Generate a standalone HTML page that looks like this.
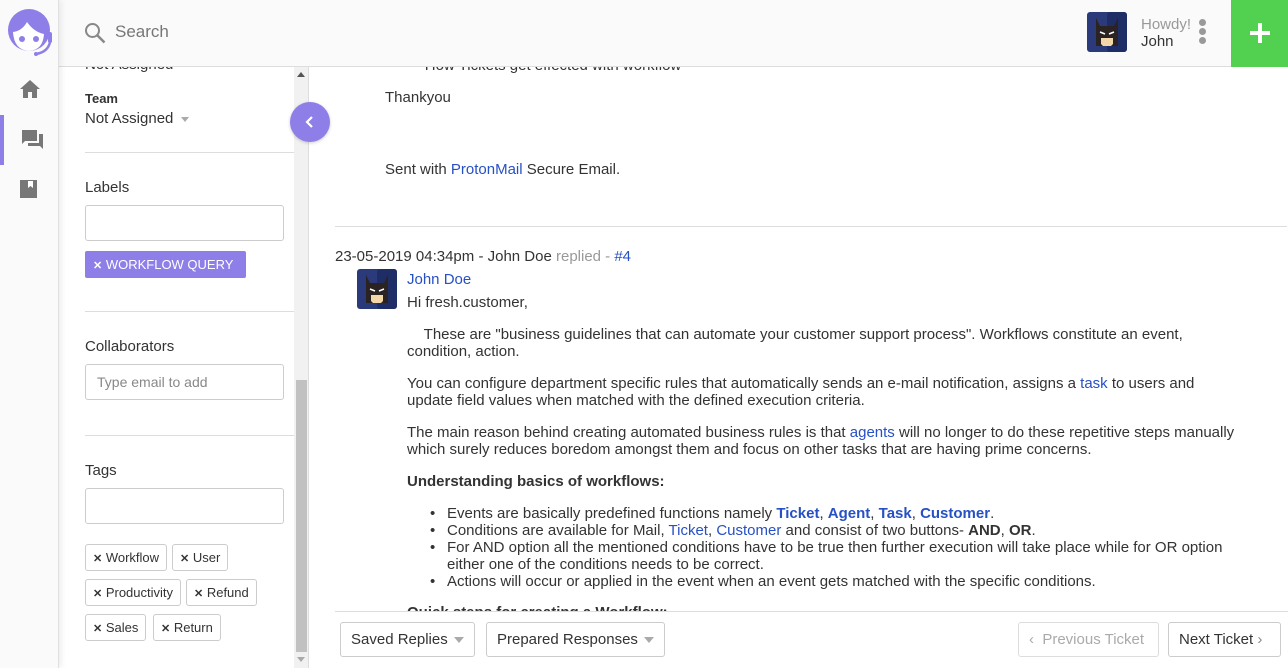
<!DOCTYPE html>
<html><head><meta charset="utf-8"><style>
*{box-sizing:border-box;margin:0;padding:0}
body{width:1288px;height:668px;overflow:hidden;font-family:"Liberation Sans",Arial,sans-serif;color:#333;background:#fff;position:relative}
.abs{position:absolute}
a{color:#2750c4;text-decoration:none}
.nav{left:0;top:0;width:59px;height:668px;background:#fafafa;border-right:1px solid #e0e0e0;box-shadow:2px 0 6px rgba(0,0,0,.08);z-index:3}
.hdr{left:59px;top:0;width:1229px;height:67px;background:#fafafa;border-bottom:1px solid #ddd;z-index:2}
.side{left:60px;top:67px;width:249px;height:601px;border-right:1px solid #ddd;overflow:hidden;font-size:15px}
.inp{position:absolute;left:25px;width:199px;height:36px;border:1px solid #ccc;border-radius:3px;background:#fff}
.hr{position:absolute;left:25px;width:209px;height:1px;background:#ddd}
.tag{position:absolute;height:27px;border:1px solid #ccc;border-radius:3px;font-size:13px;line-height:25px;padding:0 7px;color:#333;background:#fff}
.x{font-weight:bold;font-size:11px}
.main{left:310px;top:67px;width:978px;height:601px;font-size:15px;line-height:17px;color:#333}
.btn{position:absolute;top:622px;height:35px;border:1px solid #ccc;border-radius:3px;font-size:15px;line-height:33px;padding:0 10px;background:#fff;color:#333}
.caret{display:inline-block;width:0;height:0;border-left:5px solid transparent;border-right:5px solid transparent;border-top:6px solid #aaa;vertical-align:middle;margin-left:6px}
p{position:absolute}
</style></head><body>
<div class="abs nav">
 <svg class="abs" style="left:6px;top:6px" width="48" height="50" viewBox="0 0 48 50">
  <circle cx="23" cy="24" r="21" fill="#8e7ee8"/>
  <path d="M7 26 Q8 44 23 45 Q37 44 38 28 Q28 26 21 16 Q16 25 7 26Z" fill="#fff"/>
  <circle cx="16" cy="33" r="3" fill="#8e7ee8"/><circle cx="30" cy="33" r="3" fill="#8e7ee8"/>
  <rect x="42" y="26" width="4" height="11" rx="2" fill="#8e7ee8"/>
  <path d="M44 36 Q42 46 30 48" fill="none" stroke="#8e7ee8" stroke-width="2.5"/>
  <circle cx="30" cy="48" r="2" fill="#8e7ee8"/>
 </svg>
 <svg class="abs" style="left:20px;top:80px" width="20" height="18" viewBox="0 0 20 18"><path d="M8 18V12h4v6h5V9h3L10 0 0 9h3v9z" fill="#777"/></svg>
 <div class="abs" style="left:0;top:115px;width:4px;height:50px;background:#8e7ee8"></div>
 <svg class="abs" style="left:22px;top:130px" width="22" height="20" viewBox="0 0 22 20"><path d="M0 0h15v11H3l-3 3z" fill="#777"/><path d="M17 4h4v15l-3-3H6v-3h11z" fill="#777"/></svg>
 <svg class="abs" style="left:20px;top:180px" width="17" height="18" viewBox="0 0 17 18"><path d="M0 0h17v18H0z" fill="#777"/><path d="M8 1h5v7l-2.5-2L8 8z" fill="#fff"/></svg>
</div>
<div class="abs hdr">
 <svg class="abs" style="left:25px;top:22px" width="22" height="22" viewBox="0 0 22 22"><circle cx="8.5" cy="8.5" r="6.5" fill="none" stroke="#888" stroke-width="2"/><path d="M13.5 13.5l7 7" stroke="#888" stroke-width="2.5"/></svg>
 <div class="abs" style="left:56px;top:22px;font-size:17px;color:#777">Search</div>
 <svg class="abs" style="left:1028px;top:12px" width="40" height="40" viewBox="0 0 40 40"><rect width="40" height="40" rx="3" fill="#2a3a7a"/><rect x="20" width="20" height="40" rx="3" fill="#1f2d66"/><path d="M9 6l4 8h14l4-8v28H9z" fill="#2b2222"/><path d="M14 26h12v6l-2 2h-8l-2-2z" fill="#f3d7a8"/><path d="M13 20l5 2M27 20l-5 2" stroke="#fff" stroke-width="1.5"/></svg>
 <div class="abs" style="left:1082px;top:16px;font-size:15px;color:#999">Howdy!</div>
 <div class="abs" style="left:1082px;top:33px;font-size:15px;color:#333">John</div>
 <div class="abs" style="left:1140px;top:19px"><div style="width:7px;height:7px;border-radius:50%;background:#999;margin-bottom:2px"></div><div style="width:7px;height:7px;border-radius:50%;background:#999;margin-bottom:2px"></div><div style="width:7px;height:7px;border-radius:50%;background:#999"></div></div>
 <div class="abs" style="left:1172px;top:0;width:57px;height:67px;background:#52d150"><div class="abs" style="left:19px;top:31px;width:20px;height:4px;background:#fff"></div><div class="abs" style="left:27px;top:23px;width:4px;height:20px;background:#fff"></div></div>
</div>
<div class="abs side">
 <div class="abs" style="left:25px;top:-11px;color:#333">Not Assigned</div>
 <div class="abs" style="left:25px;top:24px;font-size:13px;font-weight:bold">Team</div>
 <div class="abs" style="left:25px;top:43px">Not Assigned <span class="caret" style="border-top-color:#aaa;border-width:5px 4px 0;margin-left:3px"></span></div>
 <div class="hr" style="top:85px"></div>
 <div class="abs" style="left:25px;top:112px">Labels</div>
 <div class="inp" style="top:138px"></div>
 <div class="abs" style="left:25px;top:184px;width:161px;height:27px;background:#8e7ee8;border-radius:2px;color:#fff;font-size:13px;line-height:27px;padding-left:8px"><span class="x">✕</span> WORKFLOW QUERY</div>
 <div class="hr" style="top:244px"></div>
 <div class="abs" style="left:25px;top:271px">Collaborators</div>
 <div class="inp" style="top:297px;padding-left:11px;line-height:34px;color:#888;font-size:14px">Type email to add</div>
 <div class="hr" style="top:368px"></div>
 <div class="abs" style="left:25px;top:395px">Tags</div>
 <div class="inp" style="top:421px"></div>
 <div class="tag" style="left:25px;top:477px"><span class="x">✕</span> Workflow</div>
 <div class="tag" style="left:112px;top:477px"><span class="x">✕</span> User</div>
 <div class="tag" style="left:25px;top:512px"><span class="x">✕</span> Productivity</div>
 <div class="tag" style="left:126px;top:512px"><span class="x">✕</span> Refund</div>
 <div class="tag" style="left:25px;top:547px"><span class="x">✕</span> Sales</div>
 <div class="tag" style="left:93px;top:547px"><span class="x">✕</span> Return</div>
 <div class="abs" style="left:234px;top:0;width:15px;height:601px;background:#f1f1f1"></div>
 <div class="abs" style="left:236px;top:313px;width:11px;height:272px;background:#c1c1c1"></div>
 <div class="abs" style="left:237px;top:5px;width:0;height:0;border-left:4px solid transparent;border-right:4px solid transparent;border-bottom:5px solid #555"></div>
 <div class="abs" style="left:237px;top:590px;width:0;height:0;border-left:4px solid transparent;border-right:4px solid transparent;border-top:5px solid #aaa"></div>
</div>
<div class="abs" style="left:290px;top:102px;width:40px;height:40px;border-radius:50%;background:#8e7ee8;z-index:4;box-shadow:0 1px 3px rgba(0,0,0,.2)"><svg class="abs" style="left:15px;top:14px" width="10" height="12" viewBox="0 0 10 12"><path d="M7 1L2 6l5 5" fill="none" stroke="#fff" stroke-width="2.2"/></svg></div>
<div class="abs main">
 <p style="left:97px;top:-10px">•&nbsp;&nbsp;&nbsp;How Tickets get effected with workflow</p>
 <p style="left:75px;top:22px">Thankyou</p>
 <p style="left:75px;top:94px">Sent with <a>ProtonMail</a> Secure Email.</p>
 <div class="abs" style="left:25px;top:159px;width:952px;height:1px;background:#ddd"></div>
 <p style="left:25px;top:181px">23-05-2019 04:34pm - John Doe <span style="color:#999">replied - </span><a>#4</a></p>
 <svg class="abs" style="left:47px;top:202px" width="40" height="40" viewBox="0 0 40 40"><rect width="40" height="40" rx="3" fill="#2a3a7a"/><rect x="20" width="20" height="40" rx="3" fill="#1f2d66"/><path d="M9 6l4 8h14l4-8v28H9z" fill="#2b2222"/><path d="M14 26h12v6l-2 2h-8l-2-2z" fill="#f3d7a8"/><path d="M13 20l5 2M27 20l-5 2" stroke="#fff" stroke-width="1.5"/></svg>
 <p style="left:97px;top:204px"><a>John Doe</a></p>
 <p style="left:97px;top:227px">Hi fresh.customer,</p>
 <p style="left:97px;top:259px;width:830px">&nbsp;&nbsp;&nbsp;&nbsp;These are "business guidelines that can automate your customer support process". Workflows constitute an event, condition, action.</p>
 <p style="left:97px;top:308px;width:830px">You can configure department specific rules that automatically sends an e-mail notification, assigns a <a>task</a> to users and update field values when matched with the defined execution criteria.</p>
 <p style="left:97px;top:357px;width:840px">The main reason behind creating automated business rules is that <a>agents</a> will no longer to do these repetitive steps manually which surely reduces boredom amongst them and focus on other tasks that are having prime concerns.</p>
 <p style="left:97px;top:406px;font-weight:bold">Understanding basics of workflows:</p>
 <p style="left:120px;top:438px">•</p><p style="left:137px;top:438px">Events are basically predefined functions namely <b><a>Ticket</a></b>, <b><a>Agent</a></b>, <b><a>Task</a></b>, <b><a>Customer</a></b>.</p>
 <p style="left:120px;top:455px">•</p><p style="left:137px;top:455px">Conditions are available for Mail, <a>Ticket</a>, <a>Customer</a> and consist of two buttons- <b>AND</b>, <b>OR</b>.</p>
 <p style="left:120px;top:472px">•</p><p style="left:137px;top:472px;width:810px">For AND option all the mentioned conditions have to be true then further execution will take place while for OR option either one of the conditions needs to be correct.</p>
 <p style="left:120px;top:506px">•</p><p style="left:137px;top:506px">Actions will occur or applied in the event when an event gets matched with the specific conditions.</p>
 <p style="left:97px;top:537px;font-weight:bold;height:7px;overflow:hidden">Quick steps for creating a Workflow:</p>
 <div class="abs" style="left:25px;top:544px;width:953px;height:57px;background:#fff;border-top:1px solid #ddd"></div>
</div>
<div class="btn" style="left:340px">Saved Replies<span class="caret"></span></div>
<div class="btn" style="left:486px">Prepared Responses<span class="caret"></span></div>
<div class="btn" style="left:1018px;width:141px;color:#aaa;border-color:#ddd">&lsaquo;&nbsp; Previous Ticket</div>
<div class="btn" style="left:1168px;width:113px">Next Ticket <span style="color:#888">&rsaquo;</span></div>
</body></html>
